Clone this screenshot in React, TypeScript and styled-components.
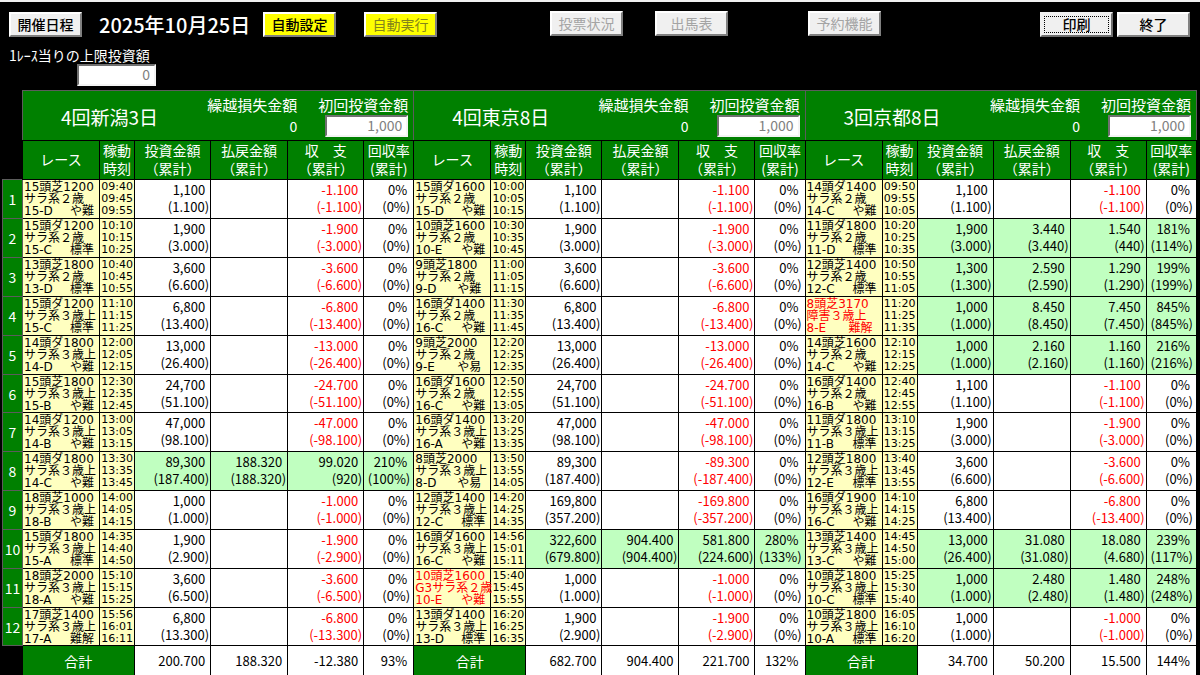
import React from "react";
import styled, { createGlobalStyle, css } from "styled-components";

const gothic = `"Liberation Sans Narrow", "Noto Sans CJK JP", sans-serif`;
const wide = `"DejaVu Sans", "Noto Sans CJK JP", sans-serif`;
const kanji = `"Noto Sans CJK JP", sans-serif`;

const GlobalStyle = createGlobalStyle`
  *, *::before, *::after { box-sizing: border-box; }
  html, body { margin: 0; background: #000; }
  body { font-family: ${kanji}; }
`;

const Page = styled.main`
  min-height: 100vh;
  overflow: hidden;
  background: #000;
  color: #fff;
  border-top: 2px solid #f0f0f0;
`;

const Toolbar = styled.header`
  display: flex;
  align-items: center;
  height: 44px;
  padding: 1px 10px 0 9px;
`;

const ToolGroup = styled.div<{ $gap: number; $before?: number; $end?: boolean; $raised?: boolean }>`
  display: flex;
  align-items: center;
  gap: ${(p) => p.$gap}px;
  margin-left: ${(p) => (p.$end ? "auto" : `${p.$before ?? 0}px`)};
  padding-bottom: ${(p) => (p.$raised ? 3 : 0)}px;
`;

const DateText = styled.h1`
  margin: 0;
  width: 147px;
  font-size: 20px;
  line-height: 24px;
  font-weight: 500;
  white-space: nowrap;
`;

const ToolButton = styled.button<{ $tone?: "yellow"; $focused?: boolean }>`
  width: 73px;
  height: 25px;
  padding: 0 0 2px;
  font-family: ${kanji};
  font-size: 14px;
  font-weight: 500;
  line-height: 20px;
  color: #000;
  background: ${(p) => (p.$tone === "yellow" ? "#ffff00" : "#f0f0f0")};
  border: 2px solid;
  border-color: #fff #808080 #808080 #fff;
  border-radius: 0;
  &:disabled {
    font-weight: 400;
    color: ${(p) => (p.$tone === "yellow" ? "#84841c" : "#a4a4a4")};
  }
  ${(p) =>
    p.$focused &&
    css`
      border-color: #f0f0f0 #707070 #707070 #f0f0f0;
      outline: 1px dotted #000;
      outline-offset: -5px;
    `}
`;

const LimitField = styled.div`
  display: flex;
  flex-direction: column;
  align-items: flex-end;
  width: 147px;
  height: 44px;
  margin-left: 9px;
`;

const LimitLabel = styled.label`
  align-self: flex-start;
  font-size: 14px;
  line-height: 18px;
  white-space: nowrap;
`;

const AmountInput = styled.input<{ $width: number }>`
  width: ${(p) => p.$width}px;
  height: 22px;
  padding: 0 4px 2px 0;
  text-align: right;
  font-family: ${gothic};
  font-size: 14px;
  line-height: 18px;
  color: #808080;
  background: #fff;
  border: 2px solid;
  border-color: #707070 #f4f4f4 #f4f4f4 #707070;
  border-radius: 0;
`;

const TableWrap = styled.section`
  padding: 0 3px 0 2px;
`;

const Board = styled.table`
  width: 100%;
  table-layout: fixed;
  border-collapse: collapse;
  th,
  td {
    padding: 0;
    font-weight: 400;
    white-space: nowrap;
  }
`;

const Blank = styled.td`
  background: #000;
`;

const VenueCell = styled.th`
  height: 50px;
  background: #008000;
  border: 1px solid #5c5c5c;
  border-bottom-color: #000;
`;

const Venue = styled.div`
  display: flex;
  height: 48px;
  padding: 3px 5px 0 38px;
`;

const VenueName = styled.span`
  flex: 1;
  align-self: center;
  text-align: left;
  font-size: 19px;
  line-height: 24px;
`;

const VenueField = styled.div`
  display: flex;
  flex-direction: column;
  align-items: flex-end;
  margin-left: 21px;
  font-size: 15px;
  line-height: 20px;
`;

const Carried = styled.span`
  font-size: 14px;
  line-height: 22px;
`;

const HeadCell = styled.th`
  height: 39px;
  background: #008000;
  border: 1px solid #000;
  font-size: 14px;
  line-height: 18px;
`;

const HeadText = styled.div`
  padding-bottom: 2px;
`;

const RowHead = styled.th`
  background: #008000;
  border: 1px solid #5c5c5c;
  font-family: ${gothic};
  font-size: 14px;
  line-height: 18px;
`;

const BodyRow = styled.tr`
  height: 39px;
  &:nth-child(6n) {
    height: 38px;
  }
`;

const RaceCell = styled.td<{ $red?: boolean }>`
  background: #ffffc0;
  border: 1px solid #000;
  border-left-color: #5c5c5c;
  color: ${(p) => (p.$red ? "#ff0000" : "#000")};
  font-family: ${wide};
  font-size: 12px;
  line-height: 12px;
`;

const RaceLine = styled.div`
  display: flex;
  height: 12px;
  padding-left: 1px;
`;

const RaceCode = styled.span<{ $short: boolean }>`
  width: ${(p) => (p.$short ? 42 : 46)}px;
`;

const TimeCell = styled.td`
  background: #ffffc0;
  border: 1px solid #000;
  color: #000;
  text-align: center;
  font-family: ${wide};
  font-size: 11px;
  line-height: 12px;
`;

const MoneyCell = styled.td<{ $hit?: boolean; $loss?: boolean }>`
  background: ${(p) => (p.$hit ? "#c0ffc0" : "#fff")};
  border: 1px solid #000;
  color: ${(p) => (p.$loss ? "#ff0000" : "#000")};
  text-align: right;
  font-family: ${gothic};
  font-size: 13px;
  line-height: 17px;
`;

const Figure = styled.div<{ $rate?: boolean }>`
  padding-right: ${(p) => (p.$rate ? 6 : 5)}px;
`;

const Running = styled.div<{ $rate?: boolean }>`
  padding: 0 ${(p) => (p.$rate ? 3 : 1)}px 2px 0;
`;

const TotalLabel = styled.th`
  height: 30px;
  background: #008000;
  font-size: 14px;
`;

const dots = (n: number) => String(n).replace(/\B(?=(\d{3})+$)/g, ".");
const commas = (n: number) => dots(n).replace(/\./g, ",");
const percent = (won: number, spent: number) => `${Math.floor((won * 100) / spent)}%`;

const later = (time: string, minutes: number) => {
  const [h, m] = time.split(":").map(Number);
  const t = h * 60 + m + minutes;
  return `${String(Math.floor(t / 60)).padStart(2, "0")}:${String(t % 60).padStart(2, "0")}`;
};

type Race = {
  title: string;
  cls: string;
  code: string;
  level: string;
  time: string;
  stake: number;
  total: number;
  payout?: number;
  red?: boolean;
};

const race = (
  title: string,
  cls: string,
  code: string,
  level: string,
  time: string,
  stake: number,
  total: number,
  payout?: number,
  red?: boolean
): Race => ({ title, cls, code, level, time, stake, total, payout, red });

const TWO = "サラ系２歳";
const THREE = "サラ系３歳上";

const venues: { name: string; races: Race[]; totals: string[] }[] = [
  {
    name: "4回新潟3日",
    totals: ["200.700", "188.320", "-12.380", "93%"],
    races: [
      race("15頭芝1200", TWO, "15-D", "や難", "09:40", 1100, 1100),
      race("15頭ダ1200", TWO, "15-C", "標準", "10:10", 1900, 3000),
      race("13頭芝1800", TWO, "13-D", "標準", "10:40", 3600, 6600),
      race("15頭ダ1200", THREE, "15-C", "標準", "11:10", 6800, 13400),
      race("14頭ダ1800", THREE, "14-D", "や難", "12:00", 13000, 26400),
      race("15頭芝1800", THREE, "15-B", "や難", "12:30", 24700, 51100),
      race("14頭ダ1200", THREE, "14-B", "や難", "13:00", 47000, 98100),
      race("14頭ダ1800", THREE, "14-C", "や難", "13:30", 89300, 187400, 188320),
      race("18頭芝1000", THREE, "18-B", "や難", "14:00", 1000, 1000),
      race("15頭ダ1800", THREE, "15-A", "標準", "14:35", 1900, 2900),
      race("18頭芝2000", THREE, "18-A", "や難", "15:10", 3600, 6500),
      race("17頭芝1400", THREE, "17-A", "難解", "15:56", 6800, 13300),
    ],
  },
  {
    name: "4回東京8日",
    totals: ["682.700", "904.400", "221.700", "132%"],
    races: [
      race("15頭ダ1600", TWO, "15-D", "や難", "10:00", 1100, 1100),
      race("10頭芝1600", TWO, "10-E", "や難", "10:30", 1900, 3000),
      race("9頭芝1800", TWO, "9-D", "や難", "11:00", 3600, 6600),
      race("16頭ダ1400", TWO, "16-C", "や難", "11:30", 6800, 13400),
      race("9頭芝2000", TWO, "9-E", "や易", "12:20", 13000, 26400),
      race("16頭ダ1600", TWO, "16-C", "や難", "12:50", 24700, 51100),
      race("16頭ダ1400", THREE, "16-A", "や難", "13:20", 47000, 98100),
      race("8頭芝2000", THREE, "8-D", "や易", "13:50", 89300, 187400),
      race("12頭芝1400", THREE, "12-C", "標準", "14:20", 169800, 357200),
      race("16頭ダ1600", THREE, "16-C", "や難", "14:56", 322600, 679800, 904400),
      race("10頭芝1600", "G3サラ系２歳", "10-E", "や難", "15:40", 1000, 1000, undefined, true),
      race("13頭ダ1400", THREE, "13-D", "標準", "16:20", 1900, 2900),
    ],
  },
  {
    name: "3回京都8日",
    totals: ["34.700", "50.200", "15.500", "144%"],
    races: [
      race("14頭ダ1400", TWO, "14-C", "や難", "09:50", 1100, 1100),
      race("11頭ダ1800", TWO, "11-D", "標準", "10:20", 1900, 3000, 3440),
      race("12頭芝1400", TWO, "12-C", "標準", "10:50", 1300, 1300, 2590),
      race("8頭芝3170", "障害３歳上", "8-E", "難解", "11:20", 1000, 1000, 8450, true),
      race("14頭芝1600", TWO, "14-C", "や難", "12:10", 1000, 1000, 2160),
      race("16頭ダ1400", TWO, "16-B", "や難", "12:40", 1100, 1100),
      race("11頭ダ1800", THREE, "11-B", "標準", "13:10", 1900, 3000),
      race("12頭芝1800", THREE, "12-E", "標準", "13:40", 3600, 6600),
      race("16頭ダ1900", THREE, "16-C", "や難", "14:10", 6800, 13400),
      race("13頭芝1400", THREE, "13-C", "や難", "14:45", 13000, 26400, 31080),
      race("10頭芝1800", THREE, "10-C", "標準", "15:25", 1000, 1000, 2480),
      race("10頭芝1800", THREE, "10-A", "標準", "16:05", 1000, 1000),
    ],
  },
];

const columnWidths = [77, 35, 76, 77, 76, 50];

const headings = [
  ["レース"],
  ["稼動", "時刻"],
  ["投資金額", "（累計）"],
  ["払戻金額", "（累計）"],
  ["収　支", "（累計）"],
  ["回収率", "(累計)"],
];

function RaceCells({ r }: { r: Race }) {
  const hit = r.payout !== undefined;
  const won = r.payout ?? 0;
  return (
    <>
      <RaceCell $red={r.red}>
        <RaceLine>{r.title}</RaceLine>
        <RaceLine>{r.cls}</RaceLine>
        <RaceLine>
          <RaceCode $short={r.code.length < 4}>{r.code}</RaceCode>
          <span>{r.level}</span>
        </RaceLine>
      </RaceCell>
      <TimeCell>
        <div>{r.time}</div>
        <div>{later(r.time, 5)}</div>
        <div>{later(r.time, 15)}</div>
      </TimeCell>
      <MoneyCell $hit={hit}>
        <Figure>{commas(r.stake)}</Figure>
        <Running>({dots(r.total)})</Running>
      </MoneyCell>
      <MoneyCell $hit={hit}>
        {hit && (
          <>
            <Figure>{dots(won)}</Figure>
            <Running>({dots(won)})</Running>
          </>
        )}
      </MoneyCell>
      <MoneyCell $hit={hit} $loss={!hit}>
        <Figure>{hit ? dots(won - r.stake) : `-${dots(r.stake)}`}</Figure>
        <Running>({hit ? dots(won - r.total) : `-${dots(r.total)}`})</Running>
      </MoneyCell>
      <MoneyCell $hit={hit}>
        <Figure $rate>{percent(won, r.stake)}</Figure>
        <Running $rate>({percent(won, r.total)})</Running>
      </MoneyCell>
    </>
  );
}

export default function App() {
  return (
    <Page>
      <GlobalStyle />
      <Toolbar>
        <ToolGroup $gap={17}>
          <ToolButton>開催日程</ToolButton>
          <DateText>2025年10月25日</DateText>
          <ToolButton $tone="yellow">自動設定</ToolButton>
        </ToolGroup>
        <ToolGroup $gap={0} $before={28}>
          <ToolButton $tone="yellow" disabled>自動実行</ToolButton>
        </ToolGroup>
        <ToolGroup $gap={32} $before={113} $raised>
          <ToolButton disabled>投票状況</ToolButton>
          <ToolButton disabled>出馬表</ToolButton>
        </ToolGroup>
        <ToolGroup $gap={0} $before={80} $raised>
          <ToolButton disabled>予約機能</ToolButton>
        </ToolGroup>
        <ToolGroup $gap={4} $end>
          <ToolButton $focused>印刷</ToolButton>
          <ToolButton>終了</ToolButton>
        </ToolGroup>
      </Toolbar>
      <LimitField>
        <LimitLabel htmlFor="limit">1ﾚｰｽ当りの上限投資額</LimitLabel>
        <AmountInput id="limit" $width={79} defaultValue="0" />
      </LimitField>
      <TableWrap>
        <Board>
          <colgroup>
            <col style={{ width: 20 }} />
            {venues.map((v) =>
              columnWidths.map((w, i) => <col key={v.name + i} style={{ width: w }} />)
            )}
          </colgroup>
          <thead>
            <tr>
              <Blank />
              {venues.map((v, i) => (
                <VenueCell key={v.name} colSpan={6} scope="colgroup">
                  <Venue>
                    <VenueName>{v.name}</VenueName>
                    <VenueField>
                      <span>繰越損失金額</span>
                      <Carried>0</Carried>
                    </VenueField>
                    <VenueField>
                      <label htmlFor={`first-${i}`}>初回投資金額</label>
                      <AmountInput id={`first-${i}`} $width={83} defaultValue="1,000" />
                    </VenueField>
                  </Venue>
                </VenueCell>
              ))}
            </tr>
            <tr>
              <Blank />
              {venues.map((v) =>
                headings.map((lines) => (
                  <HeadCell key={v.name + lines[0]} scope="col">
                    <HeadText>
                      {lines.map((line) => (
                        <div key={line}>{line}</div>
                      ))}
                    </HeadText>
                  </HeadCell>
                ))
              )}
            </tr>
          </thead>
          <tbody>
            {venues[0].races.map((_, n) => (
              <BodyRow key={n}>
                <RowHead scope="row">{n + 1}</RowHead>
                {venues.map((v) => (
                  <RaceCells key={v.name} r={v.races[n]} />
                ))}
              </BodyRow>
            ))}
          </tbody>
          <tfoot>
            <tr>
              <Blank />
              {venues.map((v) => (
                <React.Fragment key={v.name}>
                  <TotalLabel colSpan={2} scope="row">合計</TotalLabel>
                  {v.totals.map((t, i) => (
                    <MoneyCell key={i}>
                      <Figure $rate={i === 3}>{t}</Figure>
                    </MoneyCell>
                  ))}
                </React.Fragment>
              ))}
            </tr>
          </tfoot>
        </Board>
      </TableWrap>
    </Page>
  );
}
